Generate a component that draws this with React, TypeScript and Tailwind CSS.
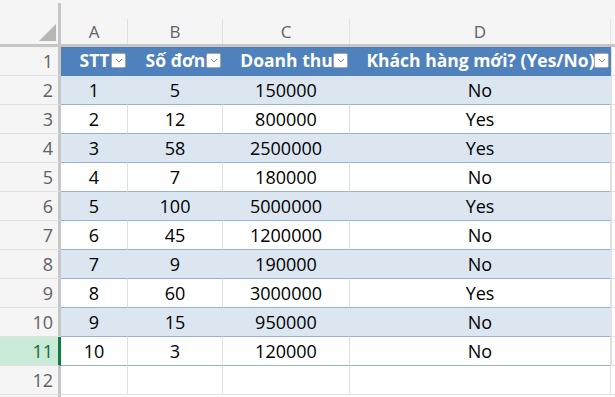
import React from "react";

type Row = { stt: string; don: string; dt: string; moi: string };

const rows: Row[] = [
  { stt: "1", don: "5", dt: "150000", moi: "No" },
  { stt: "2", don: "12", dt: "800000", moi: "Yes" },
  { stt: "3", don: "58", dt: "2500000", moi: "Yes" },
  { stt: "4", don: "7", dt: "180000", moi: "No" },
  { stt: "5", don: "100", dt: "5000000", moi: "Yes" },
  { stt: "6", don: "45", dt: "1200000", moi: "No" },
  { stt: "7", don: "9", dt: "190000", moi: "No" },
  { stt: "8", don: "60", dt: "3000000", moi: "Yes" },
  { stt: "9", don: "15", dt: "950000", moi: "No" },
  { stt: "10", don: "3", dt: "120000", moi: "No" },
];

const widths = ["w-[67px]", "w-[95px]", "w-[127px]", "w-[261px]"];
const headers = ["STT", "Số đơn", "Doanh thu", "Khách hàng mới? (Yes/No)"];

function FilterButton() {
  return (
    <div className="absolute right-[2px] top-[6px] w-[15px] h-[15px] bg-white border border-[#a6a6a6] rounded-[2px] flex items-center justify-center">
      <svg width="8" height="5" viewBox="0 0 8 5" fill="none">
        <path d="M1 1l3 3 3-3" stroke="#8a8a8a" strokeWidth="1" />
      </svg>
    </div>
  );
}

function RowHeader({ n, selected }: { n: number; selected?: boolean }) {
  return (
    <div
      className={
        selected
          ? "w-[61px] h-[29px] shrink-0 flex items-center justify-end pr-[5px] bg-[#caead8] text-[#0e6b37] border-b border-b-[#e1e1e1] border-r-[3px] border-r-[#107c41]"
          : "w-[61px] h-[29px] shrink-0 flex items-center justify-end pr-[5px] bg-[#f5f5f5] text-[#616161] border-b border-b-[#e1e1e1] border-r-[3px] border-r-[#c6c6c6]"
      }
    >
      {n}
    </div>
  );
}

export default function App() {
  return (
    <div className="w-[615px] h-[397px] overflow-hidden bg-white font-['Open_Sans',sans-serif] text-[18px] leading-none text-black">
      {/* column headers */}
      <div className="flex h-[47px]">
        <div className="w-[61px] shrink-0 bg-[#f5f5f5] border-b-[3px] border-[#c6c6c6] pt-[3px]">
          <div className="h-full border-r-[3px] border-[#c6c6c6] flex items-end justify-end pr-[2px] pb-[3px]">
            <svg width="17" height="17" viewBox="0 0 17 17">
              <path d="M17 0V17H0Z" fill="#b7b7b7" />
            </svg>
          </div>
        </div>
        {["A", "B", "C", "D"].map((c, i) => (
          <div key={c} className={`${widths[i]} shrink-0 bg-[#f5f5f5] border-b-[3px] border-[#c6c6c6] flex flex-col`}>
            <div className="mt-[19px] flex-1 border-r border-[#e1e1e1] flex items-center justify-center text-[#616161] text-[17px]">
              {c}
            </div>
          </div>
        ))}
        <div className="flex-1 bg-[#f5f5f5] border-b-[3px] border-[#c6c6c6]" />
      </div>

      {/* row 1: table header */}
      <div className="flex">
        <RowHeader n={1} />
        {headers.map((h, i) => (
          <div
            key={h}
            className={`${widths[i]} h-[29px] shrink-0 relative bg-[#4f81bd] border-b border-b-[#4f81bd] flex items-center justify-center text-white font-bold text-[17.5px]`}
          >
            {h}
            <FilterButton />
          </div>
        ))}
        <div className="flex-1 h-[29px] border-b border-l border-[#e1e1e1]" />
      </div>

      {/* data rows */}
      {rows.map((r, idx) => {
        const band = idx % 2 === 0;
        const cells = [r.stt, r.don, r.dt, r.moi];
        return (
          <div key={idx} className="flex">
            <RowHeader n={idx + 2} selected={idx === 9} />
            {cells.map((v, i) => (
              <div
                key={i}
                className={
                  band
                    ? `${widths[i]} h-[29px] shrink-0 flex items-center justify-center bg-[#dce6f1] border-b border-b-[#95b3d7] border-r border-r-[#dce6f1]`
                    : `${widths[i]} h-[29px] shrink-0 flex items-center justify-center bg-white border-b border-b-[#95b3d7] border-r border-r-[#e1e1e1]`
                }
              >
                {v}
              </div>
            ))}
            <div className="flex-1 h-[29px] border-b border-l border-[#e1e1e1]" />
          </div>
        );
      })}

      {/* row 12 */}
      <div className="flex">
        <RowHeader n={12} />
        {widths.map((w, i) => (
          <div key={i} className={`${w} h-[29px] shrink-0 border-b border-r border-[#e1e1e1]`} />
        ))}
        <div className="flex-1 h-[29px] border-b border-[#e1e1e1]" />
      </div>
      <div className="flex">
        <div className="w-[61px] h-[29px] shrink-0 bg-[#f5f5f5] border-r-[3px] border-r-[#c6c6c6]" />
      </div>
    </div>
  );
}
